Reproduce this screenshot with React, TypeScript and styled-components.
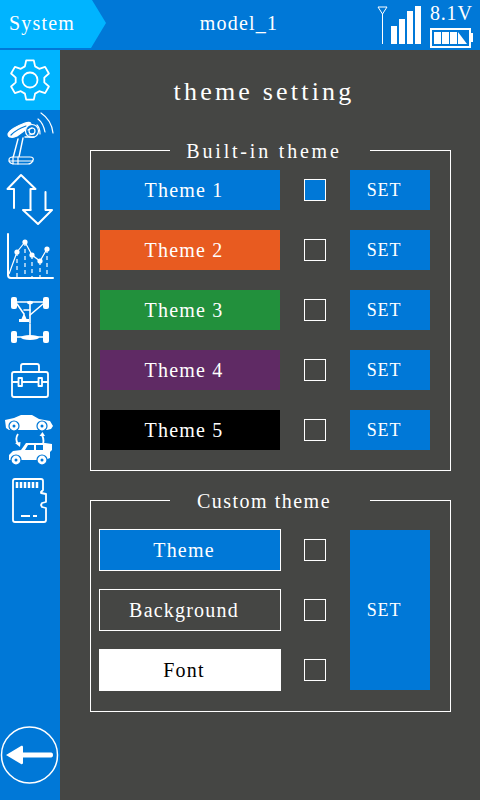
import styled, { createGlobalStyle } from 'styled-components';

const GlobalStyle = createGlobalStyle`
  html, body {
    margin: 0;
    padding: 0;
    background: #454644;
  }
  * {
    box-sizing: border-box;
  }
`;

const StyledScreen = styled.div`
  width: 480px;
  height: 800px;
  display: flex;
  flex-direction: column;
  overflow: hidden;
  color: #ffffff;
  font-family: "Liberation Serif", "DejaVu Serif", serif;
  font-size: 20px;
  letter-spacing: 1.2px;
`;

const StyledHeader = styled.header`
  height: 50px;
  flex-shrink: 0;
  display: grid;
  grid-template-columns: 106px 1fr 108px;
  background: #0078d7;
`;

const StyledCrumb = styled.div`
  height: 48px;
  padding: 0 0 1px 9px;
  display: flex;
  align-items: center;
  background: #00b4ff;
  clip-path: polygon(0 0, 92px 0, 106px 23px, 91px 48px, 0 48px);
`;

const StyledModelName = styled.div`
  display: flex;
  align-items: center;
  justify-content: center;
  padding-bottom: 3px;
`;

const StyledStatus = styled.div`
  display: flex;
  padding: 4px 0 0 5px;
  gap: 8px;
`;

const StyledPower = styled.div`
  display: flex;
  flex-direction: column;
  gap: 3px;
`;

const StyledVoltage = styled.div`
  height: 21px;
  line-height: 18px;
  white-space: nowrap;
  letter-spacing: 0.8px;
`;

const StyledBody = styled.div`
  flex: 1;
  display: flex;
  min-height: 0;
`;

const StyledSidebar = styled.nav`
  width: 60px;
  flex-shrink: 0;
  display: flex;
  flex-direction: column;
  background: #0078d7;
`;

const StyledNavItem = styled.div<{ $active?: boolean }>`
  width: 60px;
  height: 60px;
  background: ${(p) => (p.$active ? '#00b4ff' : 'transparent')};
`;

const StyledBackButton = styled.div`
  margin-top: auto;
  width: 60px;
  height: 60px;
  margin-bottom: 15px;
`;

const StyledMain = styled.main`
  flex: 1;
  padding: 0 29px 0 30px;
  background: #454644;
`;

const StyledTitle = styled.h1`
  margin: 0;
  height: 100px;
  padding: 27px 13px 0 0;
  font-size: 26px;
  line-height: 30px;
  font-weight: 400;
  letter-spacing: 3.2px;
  text-align: center;
`;

const StyledGroup = styled.section<{ $height: number; $gap: number }>`
  position: relative;
  height: ${(p) => p.$height}px;
  margin-bottom: ${(p) => p.$gap}px;
  border: 1px solid #ffffff;
`;

const StyledLegend = styled.div<{ $spacing: number }>`
  position: absolute;
  top: -10px;
  left: 79px;
  width: 200px;
  height: 20px;
  padding-right: 12px;
  line-height: 20px;
  letter-spacing: ${(p) => p.$spacing}px;
  text-align: center;
  background: #454644;
`;

const StyledRows = styled.div`
  display: flex;
  flex-direction: column;
  gap: 20px;
  padding: 19px 0 0 9px;
`;

const StyledRow = styled.div`
  display: flex;
  align-items: center;
`;

const StyledThemeBar = styled.div<{ $color: string }>`
  width: 180px;
  height: 40px;
  padding: 1px 12px 0 0;
  display: flex;
  align-items: center;
  justify-content: center;
  background: ${(p) => p.$color};
`;

const StyledCheck = styled.div<{ $checked?: boolean }>`
  width: 22px;
  height: 22px;
  margin: 0 24px;
  border: 1px solid #ffffff;
  background: ${(p) => (p.$checked ? '#0078d7' : 'transparent')};
`;

const StyledSet = styled.div`
  width: 80px;
  height: 40px;
  padding: 1px 12px 0 0;
  display: flex;
  align-items: center;
  justify-content: center;
  background: #0078d7;
  font-size: 18px;
  letter-spacing: 0.8px;
`;

const StyledCustomLayout = styled.div`
  display: flex;
  padding: 28px 0 0 8px;
`;

const StyledCustomRows = styled.div`
  display: flex;
  flex-direction: column;
  gap: 18px;
`;

const StyledCustomBar = styled.div<{ $color: string; $text: string }>`
  width: 182px;
  height: 42px;
  padding: 1px 12px 0 0;
  display: flex;
  align-items: center;
  justify-content: center;
  border: 1px solid #ffffff;
  background: ${(p) => p.$color};
  color: ${(p) => p.$text};
`;

const StyledCustomCheck = styled(StyledCheck)`
  margin: 0 24px 0 23px;
`;

const StyledBigSet = styled(StyledSet)`
  height: 160px;
  margin-top: 1px;
`;

const themes = [
  { name: 'Theme 1', color: '#0078d7', checked: true },
  { name: 'Theme 2', color: '#e85b20' },
  { name: 'Theme 3', color: '#22903c' },
  { name: 'Theme 4', color: '#5f2a64' },
  { name: 'Theme 5', color: '#000000' },
];

const customParts = [
  { name: 'Theme', color: '#0078d7', text: '#ffffff' },
  { name: 'Background', color: 'transparent', text: '#ffffff' },
  { name: 'Font', color: '#ffffff', text: '#000000' },
];

// 6 teeth, starting from the top
const gearPath = () => {
  const pts: string[] = [];
  for (let i = 0; i < 6; i++) {
    const a = (i * Math.PI) / 3 - Math.PI / 2;
    const at = (r: number, d: number) =>
      `${(30 + r * Math.cos(a + d)).toFixed(1)} ${(30 + r * Math.sin(a + d)).toFixed(1)}`;
    pts.push(at(14.5, -0.36), at(20, -0.19), at(20, 0.19), at(14.5, 0.36));
  }
  return `M${pts.join('L')}Z`;
};

const GearIcon = () => (
  <svg width="60" height="60" viewBox="0 0 60 60" fill="none" stroke="#fff" strokeWidth="1.8" strokeLinejoin="round">
    <path d={gearPath()} />
    <circle cx="30" cy="30" r="7.5" />
  </svg>
);

const RadioIcon = () => (
  <svg width="60" height="60" viewBox="0 0 60 60" fill="none" stroke="#fff" strokeWidth="1.2" strokeLinecap="round" strokeLinejoin="round">
    <path d="M8 24c1-4 9-8 17-11 3-1 6-1 6 1l-3 4-11 8c-4 2-9 2-9-2z" fill="#fff" />
    <path d="M11 25c4-4 9-7 15-9" stroke="#0078d7" />
    <circle cx="32" cy="21" r="6.500" fill="#0078d7" />
    <circle cx="32" cy="21" r="3" />
    <path d="M28 20l4-2M29 25l5-1" />
    <path d="M18 29l-5 19M23 28l-4 19M25 27l9 0" strokeWidth="1.400" />
    <path d="M9 50c0-2 2-3 4-3h17c3 0 4 2 3 3-1 3-3 4-5 4H15c-4 0-6-2-6-4z" fill="#0078d7" />
    <path d="M13 47v7M18 47v7M9 51h24" />
    <path d="M37 15c2 2 3 5 3 9M38 9c4 3 6 8 7 13M41 3c6 4 11 11 12 20" />
  </svg>
);

const ArrowsIcon = () => (
  <svg width="60" height="60" viewBox="0 0 60 60" fill="none" stroke="#fff" strokeWidth="2" strokeLinejoin="round" strokeLinecap="round">
    <path d="M14 38V19H7.500L21 5l14.500 14h-5v21" />
    <path d="M30.500 40H23l15 14 14-14h-6.500V22" />
  </svg>
);

const ChartIcon = () => (
  <svg width="60" height="60" viewBox="0 0 60 60" fill="none" stroke="#fff">
    <path d="M8 4v41c0 2 1 3 3 3h42" strokeWidth="2" strokeLinecap="round" />
    <path d="M9 44l8-22 8-10 7 13 8 6 7-12" strokeWidth="1.200" />
    <path d="M17 22v26M25 12v36M32 25v23M40 31v17M47 19v29" strokeWidth="1.200" strokeDasharray="4 3" />
    <g fill="#fff" stroke="none">
      <circle cx="17" cy="22" r="2.600" />
      <circle cx="25" cy="12" r="2.600" />
      <circle cx="32" cy="25" r="2.600" />
      <circle cx="40" cy="31" r="2.600" />
      <circle cx="47" cy="19" r="2.600" />
    </g>
  </svg>
);

const ChassisIcon = () => (
  <svg width="60" height="60" viewBox="0 0 60 60" fill="none" stroke="#fff" strokeWidth="1.600" strokeLinecap="round">
    <g fill="#fff" stroke="none">
      <rect x="11" y="7" width="6" height="12" rx="2" />
      <rect x="43" y="7" width="6" height="12" rx="2" />
      <rect x="11" y="41" width="6" height="12" rx="2" />
      <rect x="43" y="41" width="6" height="12" rx="2" />
      <ellipse cx="30" cy="47.500" rx="9" ry="2.500" />
      <ellipse cx="30" cy="12.500" rx="3" ry="1.800" />
      <path d="M24 23l2.500 6H29v3H19v-3h2.500z" />
    </g>
    <path d="M17 12h26M17 47h26M30 12v21M30 34v13" />
    <path d="M17 14l7 10M43 14l-13 11M30 20h-6" />
  </svg>
);

const ToolboxIcon = () => (
  <svg width="60" height="60" viewBox="0 0 60 60" fill="none" stroke="#fff" strokeWidth="1.800" strokeLinejoin="round">
    <rect x="12" y="22" width="36" height="25" rx="2" />
    <path d="M21 22v-6c0-1 1-2 2-2h14c1 0 2 1 2 2v6" />
    <path d="M12 32h6M22 32h16M42 32h6" />
    <rect x="18.500" y="28" width="3.500" height="8" />
    <rect x="38.500" y="28" width="3.500" height="8" />
  </svg>
);

const Wheel = ({ x, y }: { x: number; y: number }) => (
  <g>
    <circle cx={x} cy={y} r="5" fill="#fff" stroke="#0078d7" strokeWidth="1.200" />
    <circle cx={x} cy={y} r="1.500" fill="#0078d7" />
  </g>
);

const CarsIcon = () => (
  <svg width="60" height="60" viewBox="0 0 60 60" fill="none">
    <path d="M5 10l9-2 7-3h11l7 4 11 2 3 5-2 3-4 1H9l-3-2z" fill="#fff" />
    <Wheel x={14} y={16} />
    <Wheel x={42} y={16} />
    <path d="M18 24c-2 3-2 7 0 10M42 37c2-4 2-8 0-12" stroke="#fff" strokeWidth="1.800" />
    <path d="M15 33l5 4 .5-5zM39.500 26l3-4 2.500 4z" fill="#fff" />
    <path d="M9 50v-5l4-4 8-1 5-7h19l7 1v6l-2 2v6l-5 2H12z" fill="#fff" />
    <path d="M28 35h6v5h-9zM36 35h7v5h-7z" fill="#0078d7" />
    <Wheel x={16} y={50} />
    <Wheel x={42} y={50} />
  </svg>
);

const SdCardIcon = () => (
  <svg width="60" height="60" viewBox="0 0 60 60" fill="none" stroke="#fff" strokeWidth="1.800" strokeLinejoin="round">
    <path d="M15 9h26c1 0 2 1 2 2v9l-2 2v1l5 1v8l-4 1-1 2 1 2 4 1v12c0 1-1 2-2 2H15c-1 0-2-1-2-2V11c0-1 1-2 2-2z" />
    <path d="M17 12v6M21 12v6M25 12v6M29 12v6M33 12v6M37 12v6" strokeWidth="2.500" />
    <path d="M21 46h9M33 46h4" strokeWidth="1.800" />
  </svg>
);

const BackIcon = () => (
  <svg width="60" height="60" viewBox="0 0 60 60" fill="none">
    <circle cx="29.500" cy="30" r="28" stroke="#fff" strokeWidth="1.500" />
    <path d="M6 30l15-9c1-.5 2 0 2 1v5.500h28c1.500 0 2 1 2 2.500s-.5 2.500-2 2.500H23V38c0 1-1 1.500-2 1z" fill="#fff" />
  </svg>
);

const SignalIcon = () => (
  <svg width="45" height="42" viewBox="0 0 45 42" fill="none">
    <path d="M1 3h9L5.500 10zM5.500 10v30" stroke="#fff" strokeWidth="1" />
    <g fill="#fff">
      <rect x="14" y="22" width="6" height="18" />
      <rect x="22" y="15" width="6" height="25" />
      <rect x="30" y="7" width="6" height="33" />
      <rect x="38" y="2" width="6" height="38" />
    </g>
  </svg>
);

const BatteryIcon = () => (
  <svg width="44" height="20" viewBox="0 0 44 20" fill="none">
    <rect x="1" y="1" width="39" height="18" stroke="#fff" strokeWidth="2" />
    <rect x="40" y="5" width="3" height="9" fill="#fff" />
    <g fill="#fff">
      <rect x="4" y="4" width="7" height="12" />
      <rect x="12" y="4" width="7" height="12" />
      <rect x="20" y="4" width="7" height="12" />
      <path d="M28 4l9 12h-9z" />
    </g>
  </svg>
);

const navIcons = [RadioIcon, ArrowsIcon, ChartIcon, ChassisIcon, ToolboxIcon, CarsIcon, SdCardIcon];

export default function App() {
  return (
    <StyledScreen>
      <GlobalStyle />
      <StyledHeader>
        <StyledCrumb>System</StyledCrumb>
        <StyledModelName>model_1</StyledModelName>
        <StyledStatus>
          <SignalIcon />
          <StyledPower>
            <StyledVoltage>8.1V</StyledVoltage>
            <BatteryIcon />
          </StyledPower>
        </StyledStatus>
      </StyledHeader>
      <StyledBody>
        <StyledSidebar>
          <StyledNavItem $active>
            <GearIcon />
          </StyledNavItem>
          {navIcons.map((Icon, index) => (
            <StyledNavItem key={index}>
              <Icon />
            </StyledNavItem>
          ))}
          <StyledBackButton>
            <BackIcon />
          </StyledBackButton>
        </StyledSidebar>
        <StyledMain>
          <StyledTitle>theme setting</StyledTitle>
          <StyledGroup $height={321} $gap={29}>
            <StyledLegend $spacing={2.8}>Built-in theme</StyledLegend>
            <StyledRows>
              {themes.map((theme) => (
                <StyledRow key={theme.name}>
                  <StyledThemeBar $color={theme.color}>{theme.name}</StyledThemeBar>
                  <StyledCheck $checked={theme.checked} />
                  <StyledSet>SET</StyledSet>
                </StyledRow>
              ))}
            </StyledRows>
          </StyledGroup>
          <StyledGroup $height={212} $gap={0}>
            <StyledLegend $spacing={1.5}>Custom theme</StyledLegend>
            <StyledCustomLayout>
              <StyledCustomRows>
                {customParts.map((part) => (
                  <StyledRow key={part.name}>
                    <StyledCustomBar $color={part.color} $text={part.text}>
                      {part.name}
                    </StyledCustomBar>
                    <StyledCustomCheck />
                  </StyledRow>
                ))}
              </StyledCustomRows>
              <StyledBigSet>SET</StyledBigSet>
            </StyledCustomLayout>
          </StyledGroup>
        </StyledMain>
      </StyledBody>
    </StyledScreen>
  );
}
